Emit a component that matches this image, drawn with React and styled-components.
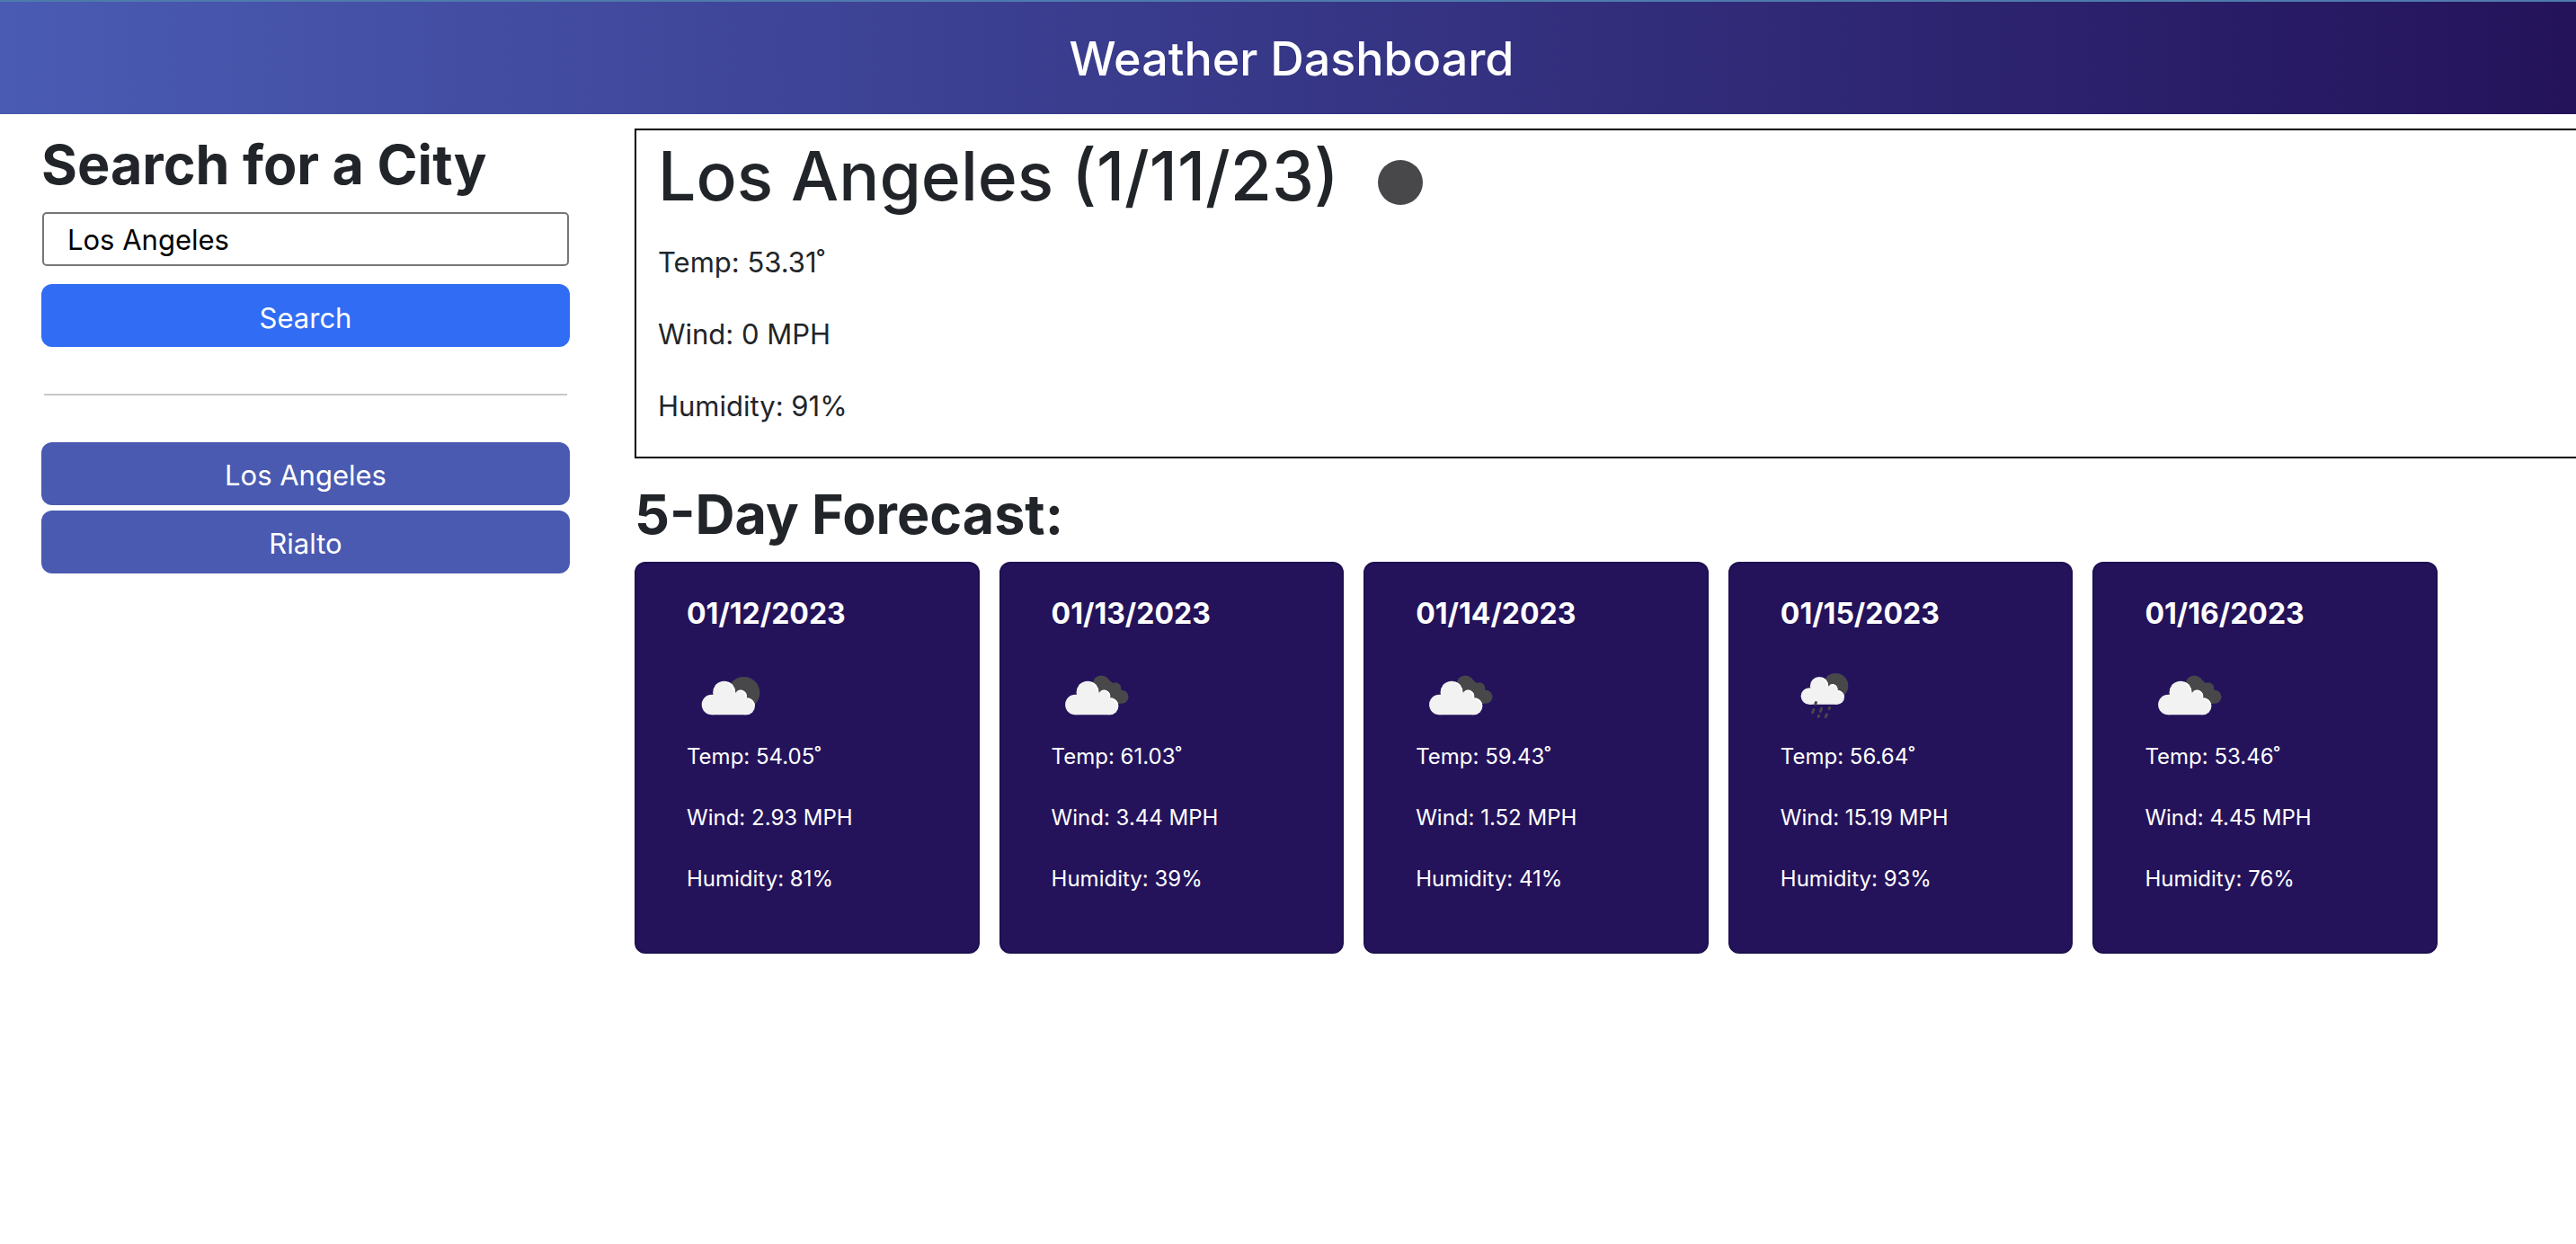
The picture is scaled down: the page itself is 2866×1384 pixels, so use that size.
import React, { useState } from "react";
import styled, { createGlobalStyle } from "styled-components";

const GlobalStyle = createGlobalStyle`
  *, *::before, *::after { box-sizing: border-box; }
  body {
    margin: 0;
    background: #fff;
    color: #212529;
    font-family: Inter, "Liberation Sans", sans-serif;
    font-size: 31px;
    line-height: 48px;
    overflow-x: hidden;
  }
`;

const Header = styled.header`
  padding: 32px 12px 29px 20px;
  border-top: 2px solid #4e7aad;
  background: linear-gradient(to right, #4a5bb3, #24135b);
  color: #fff;
  text-align: center;
`;

const PageTitle = styled.h1`
  margin: 0;
  font-size: 52px;
  font-weight: 500;
  line-height: 64px;
`;

const Layout = styled.div`
  display: grid;
  grid-template-columns: 588px minmax(0, 1fr);
  column-gap: 72px;
  padding: 16px 0 0 46px;
`;

const Sidebar = styled.aside`
  display: flex;
  flex-direction: column;
`;

const SectionTitle = styled.h2`
  margin: 0 0 13px;
  font-size: 61px;
  font-weight: 700;
  line-height: 80px;
`;

const SearchForm = styled.form`
  display: flex;
  flex-direction: column;
`;

const CityInput = styled.input`
  height: 60px;
  margin: 0 1px 20px;
  padding: 0 26px;
  border: 2px solid #767676;
  border-radius: 5px;
  background: #fff;
  color: #000;
  font: inherit;
`;

const Button = styled.button`
  display: block;
  width: 100%;
  height: 70px;
  padding: ${(p) => (p.$primary ? "6px" : "4px")} 16px 0;
  border: 0;
  border-radius: 12px;
  background: ${(p) => (p.$primary ? "#316cf4" : "#4a5ab1")};
  color: #fff;
  font: inherit;
  cursor: pointer;
`;

const Divider = styled.hr`
  width: calc(100% - 6px);
  height: 2px;
  margin: 52px auto;
  border: 0;
  background: #c8c8c8;
`;

const History = styled.div`
  display: flex;
  flex-direction: column;
  gap: 6px;
`;

const Current = styled.section`
  padding: 0 24px;
  border: 2px solid #000;
  border-right: 0;
`;

const CurrentHeading = styled.div`
  display: flex;
  align-items: flex-end;
  gap: 18px;
  height: 108px;
  margin-bottom: 15px;
`;

const CityName = styled.h2`
  align-self: flex-start;
  margin: 0;
  font-size: 75px;
  font-weight: 500;
  line-height: 102px;
`;

const Reading = styled.p`
  margin: 0 0 32px;
`;

const Forecast = styled.section`
  padding: 22px 154px 0 0;
`;

const Cards = styled.div`
  display: grid;
  grid-template-columns: repeat(5, minmax(0, 1fr));
  gap: 22px;
`;

const Card = styled.article`
  padding: 36px 56px 31px;
  border: 2px solid #1e104f;
  border-radius: 12px;
  background: #24135b;
  color: #fff;
  font-size: 24px;
  line-height: 36px;
`;

const CardDate = styled.h3`
  margin: 0 0 21px;
  font-size: 32px;
  font-weight: 700;
  line-height: 40px;
`;

const Icon = styled.svg`
  display: block;
  flex: none;
  width: 100px;
  height: 100px;
`;

const DARK = "#48484a";
const LIGHT = "#f2f2f2";

function Cloud({ transform }) {
  return (
    <g transform={transform}>
      <g fill={LIGHT}>
        <circle cx="41.7" cy="46.2" r="12.5" />
        <circle cx="28" cy="60" r="11.3" />
        <circle cx="60" cy="50.5" r="6.8" />
        <circle cx="66.3" cy="61.6" r="9.7" />
        <path d="M28 71.3V55L33 46H53L60 50L66.3 56V71.3Z" />
      </g>
      <g fill="none" stroke="#fff" strokeWidth="1.6" strokeLinecap="round">
        <path d="M46 35.5A12 12 0 0 1 53 46" />
        <path d="M57 45.2A6.2 6.2 0 0 1 66 51.5" />
        <path d="M68.5 53.5A8.8 8.8 0 0 1 75 60" />
      </g>
    </g>
  );
}

function WeatherIcon({ kind }) {
  return (
    <Icon viewBox="0 0 100 100" role="img" aria-label={kind}>
      {kind === "clear" && <circle cx="50" cy="50" r="25" fill={DARK} />}
      {kind === "few clouds" && (
        <>
          <circle cx="63.5" cy="46.7" r="17.8" fill={DARK} />
          <Cloud />
        </>
      )}
      {kind === "broken clouds" && (
        <>
          <g fill={DARK}>
            <circle cx="55.3" cy="37" r="9.6" />
            <circle cx="71" cy="41.6" r="6.3" />
            <circle cx="78" cy="51.3" r="7.5" />
            <path d="M60 29L68 36L76 42L84 50L76 59L64 58L48 42Z" />
          </g>
          <Cloud transform="translate(-1.6 0)" />
        </>
      )}
      {kind === "rain" && (
        <>
          <circle cx="61.3" cy="39" r="14" fill={DARK} />
          <Cloud transform="translate(9 1.5) scale(0.816)" />
          <g stroke={DARK} strokeWidth="3" strokeLinecap="round">
            <path d="M39.4 57.5L38.8 59.5" />
            <path d="M36.8 65.6L35.6 68.8" />
            <path d="M45.6 64.4L44.4 67.4" />
            <path d="M54.6 63.4L54.2 64.6" />
            <path d="M42.6 72.2L42.2 73.4" />
            <path d="M51.4 70.8L50.2 73.6" />
          </g>
        </>
      )}
    </Icon>
  );
}

const forecast = [
  { date: "01/12/2023", kind: "few clouds", temp: "54.05", wind: "2.93", humidity: 81 },
  { date: "01/13/2023", kind: "broken clouds", temp: "61.03", wind: "3.44", humidity: 39 },
  { date: "01/14/2023", kind: "broken clouds", temp: "59.43", wind: "1.52", humidity: 41 },
  { date: "01/15/2023", kind: "rain", temp: "56.64", wind: "15.19", humidity: 93 },
  { date: "01/16/2023", kind: "broken clouds", temp: "53.46", wind: "4.45", humidity: 76 },
];

function Readings({ temp, wind, humidity }) {
  return (
    <>
      <Reading>{`Temp: ${temp}˚`}</Reading>
      <Reading>{`Wind: ${wind} MPH`}</Reading>
      <Reading>{`Humidity: ${humidity}%`}</Reading>
    </>
  );
}

export default function App() {
  const [city, setCity] = useState("Los Angeles");

  return (
    <>
      <GlobalStyle />
      <Header>
        <PageTitle>Weather Dashboard</PageTitle>
      </Header>
      <Layout>
        <Sidebar>
          <SearchForm onSubmit={(e) => e.preventDefault()}>
            <SectionTitle>
              <label htmlFor="city">Search for a City</label>
            </SectionTitle>
            <CityInput id="city" type="text" value={city} onChange={(e) => setCity(e.target.value)} />
            <Button type="submit" $primary>Search</Button>
          </SearchForm>
          <Divider />
          <History>
            {["Los Angeles", "Rialto"].map((name) => (
              <Button key={name} type="button" onClick={() => setCity(name)}>{name}</Button>
            ))}
          </History>
        </Sidebar>
        <main>
          <Current>
            <CurrentHeading>
              <CityName>Los Angeles (1/11/23)</CityName>
              <WeatherIcon kind="clear" />
            </CurrentHeading>
            <Readings temp="53.31" wind="0" humidity={91} />
          </Current>
          <Forecast>
            <SectionTitle>5-Day Forecast:</SectionTitle>
            <Cards>
              {forecast.map((day) => (
                <Card key={day.date}>
                  <CardDate>{day.date}</CardDate>
                  <WeatherIcon kind={day.kind} />
                  <Readings temp={day.temp} wind={day.wind} humidity={day.humidity} />
                </Card>
              ))}
            </Cards>
          </Forecast>
        </main>
      </Layout>
    </>
  );
}
